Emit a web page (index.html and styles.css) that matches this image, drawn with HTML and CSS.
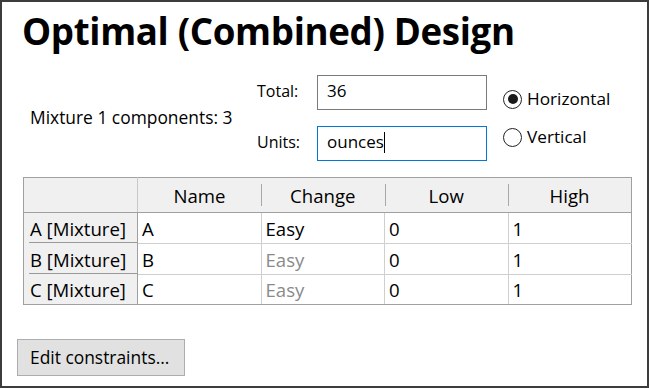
FILE: index.html
```html
<!DOCTYPE html>
<html>
<head>
<meta charset="utf-8">
<link rel="stylesheet" href="styles.css">
</head>
<body>
<div class="frame">
  <h1 class="title">Optimal (Combined) Design</h1>
  <div class="settings">
    <div class="mix-label">Mixture 1 components: 3</div>
    <div class="fields">
      <label class="field-label">Total:</label>
      <div class="textbox">36</div>
      <label class="field-label">Units:</label>
      <div class="textbox focused">ounces<span class="caret"></span></div>
    </div>
    <div class="radios">
      <div class="radio"><span class="circle checked"></span>Horizontal</div>
      <div class="radio"><span class="circle"></span>Vertical</div>
    </div>
  </div>
  <table class="grid">
    <colgroup>
      <col class="c-row"><col class="c-data"><col class="c-data"><col class="c-data"><col class="c-data">
    </colgroup>
    <thead>
      <tr>
        <th class="corner"></th>
        <th class="colhead">Name</th>
        <th class="colhead">Change</th>
        <th class="colhead">Low</th>
        <th class="colhead">High</th>
      </tr>
    </thead>
    <tbody>
      <tr class="r1">
        <th class="rowhead"><span>A [Mixture]</span></th>
        <td>A</td><td>Easy</td><td>0</td><td>1</td>
      </tr>
      <tr class="r2">
        <th class="rowhead"><span>B [Mixture]</span></th>
        <td>B</td><td class="dim">Easy</td><td>0</td><td>1</td>
      </tr>
      <tr class="r3">
        <th class="rowhead"><span>C [Mixture]</span></th>
        <td>C</td><td class="dim">Easy</td><td>0</td><td>1</td>
      </tr>
    </tbody>
  </table>
  <button class="btn">Edit constraints...</button>
</div>
</body>
</html>
```
FILE: styles.css
```css
* { box-sizing: border-box; }
html, body { margin: 0; padding: 0; background: #fff; }
body {
  font-family: "Open Sans", "Noto Sans", sans-serif;
  color: #000;
}
.frame {
  width: 649px;
  height: 388px;
  border: 2px solid #3c3c3c;
  overflow: hidden;
}
.title {
  margin: 6px 0 0 20px;
  font-size: 36.7px;
  font-weight: 700;
  line-height: 46px;
  letter-spacing: -0.35px;
}
.settings {
  display: flex;
  align-items: flex-start;
  margin-top: 21px;
  height: 88px;
}
.mix-label {
  font-size: 17.4px;
  margin: 30px 0 0 28px;
  width: 227px;
  white-space: nowrap;
}
.fields {
  display: grid;
  grid-template-columns: 60px 170px;
  grid-template-rows: 35px 35px;
  row-gap: 16px;
  align-items: center;
}
.field-label {
  font-size: 16px;
  padding-bottom: 4px;
}
.textbox {
  height: 35px;
  border: 1px solid #7a7a7a;
  font-size: 17px;
  padding: 3px 0 0 9px;
  line-height: 24px;
}
.textbox.focused {
  border-color: #0078d7;
}
.caret {
  display: inline-block;
  width: 1.5px;
  height: 21px;
  background: #000;
  vertical-align: -5px;
}
.radios {
  margin: 14px 0 0 16px;
  display: flex;
  flex-direction: column;
  gap: 18px;
}
.radio {
  display: flex;
  align-items: center;
  font-size: 17.2px;
  line-height: 20px;
}
.circle {
  width: 19px;
  height: 19px;
  border: 1px solid #222;
  border-radius: 50%;
  margin-right: 5px;
  display: flex;
  align-items: center;
  justify-content: center;
}
.circle.checked::after {
  content: "";
  width: 10px;
  height: 10px;
  border-radius: 50%;
  background: #1a1a1a;
}
.grid {
  margin: 14px 0 0 21px;
  border-collapse: collapse;
  table-layout: fixed;
  width: 608px;
  font-size: 18.6px;
}
.c-row { width: 114px; }
.c-data { width: 123.5px; }
.grid th, .grid td {
  padding: 0;
  font-weight: 400;
}
.grid thead tr { height: 35px; }
.corner {
  background: #f0f0f0;
  border: 1px solid #a0a0a0;
  border-right: 1px solid #c8c8c8;
}
.colhead {
  position: relative;
  background: #f0f0f0;
  border-top: 1px solid #a0a0a0;
  border-bottom: 1px solid #a0a0a0;
  text-align: center;
}
.colhead:last-child { border-right: 1px solid #a0a0a0; }
.colhead + .colhead::before {
  content: "";
  position: absolute;
  left: 0;
  top: 6px;
  bottom: 6px;
  width: 1px;
  background: #a8a8a8;
}
.grid tbody tr { height: 31px; }
.grid tbody tr.r3 { height: 30px; }
.rowhead {
  background: #f0f0f0;
  border-left: 1px solid #a0a0a0;
  border-right: 1px solid #a0a0a0;
  text-align: left;
  padding: 0;
}
.rowhead span {
  display: block;
  margin-left: 5px;
  padding: 2px 0 0 1px;
  height: 100%;
  line-height: 26px;
  border-bottom: 1px solid #9a9a9a;
  white-space: nowrap;
}
.r3 .rowhead { border-bottom: 1px solid #a0a0a0; }
.r3 .rowhead span { border-bottom: none; }
.grid td {
  border: 1px solid #cfcfcf;
  padding: 1px 0 0 4px;
  line-height: 26px;
}
.grid tr td:last-child { border-right: 1px solid #a0a0a0; }
.grid tr.r3 td { border-bottom: 1px solid #a0a0a0; }
.dim { color: #8a8a8a; }
.btn {
  display: block;
  margin: 34px 0 0 15px;
  width: 168px;
  height: 37px;
  background: #e1e1e1;
  border: 1px solid #adadad;
  font-family: inherit;
  font-size: 17.4px;
  color: #000;
  text-align: left;
  padding: 0 0 2px 12px;
}
```
